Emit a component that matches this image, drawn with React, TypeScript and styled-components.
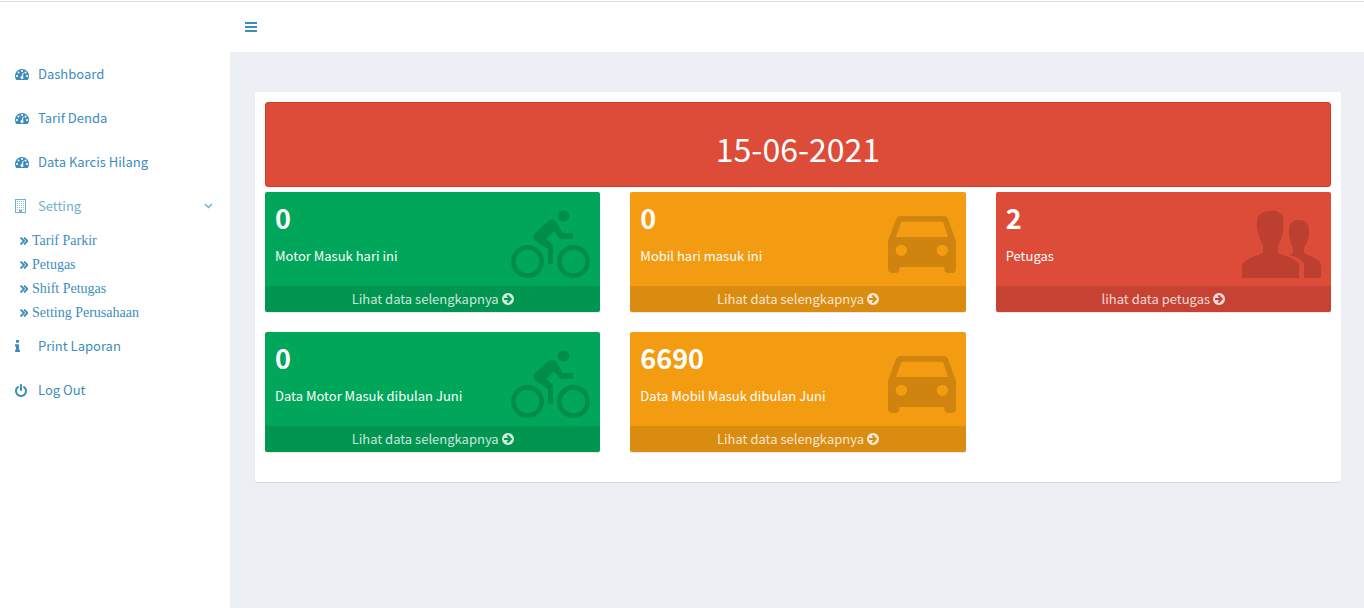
import React from "react";
import styled, { createGlobalStyle } from "styled-components";

const sans = `"Noto Sans CJK SC", "Noto Sans", sans-serif`;

const GlobalStyle = createGlobalStyle`
  * { box-sizing: border-box; }
  body {
    margin: 0;
    background: #ecf0f5;
    font-family: ${sans};
    font-size: 13px;
    line-height: 20px;
    color: #333;
  }
`;

const Page = styled.div`
  display: flex;
  min-height: 100vh;
  border-top: 1px solid #fff;
  background: #ecf0f5;
`;

const Sidebar = styled.nav`
  flex: 0 0 230px;
  padding-top: 50px;
  border-top: 1px solid #d8dadc;
  background: #fff;
`;

const MenuList = styled.ul`
  list-style: none;
  margin: 0;
  padding: 0;
`;

const MenuLink = styled.a<{ $open?: boolean }>`
  display: flex;
  align-items: center;
  height: 44px;
  padding: 0 17px 0 15px;
  color: ${(p) => (p.$open ? "#72afd2" : "#3c8dbc")};
  text-decoration: none;
`;

const IconSlot = styled.span`
  display: flex;
  flex: 0 0 23px;
`;

const MenuText = styled.span`
  flex: 1;
`;

const SubLink = styled.a`
  display: flex;
  align-items: center;
  gap: 4px;
  height: 24px;
  padding: 2px 0 0 20px;
  color: #3c8dbc;
  font-family: "Liberation Serif", serif;
  font-size: 14px;
  text-decoration: none;
`;

const Main = styled.div`
  flex: 1;
  min-width: 0;
`;

const TopBar = styled.header`
  display: flex;
  align-items: center;
  height: 51px;
  padding-left: 15px;
  border-top: 1px solid #d8dadc;
  background: #fff;
`;

const ToggleButton = styled.button`
  display: flex;
  padding: 0;
  border: 0;
  background: none;
  color: #3c8dbc;
`;

const Box = styled.main`
  margin: 40px 23px 40px 25px;
  padding: 10px 10px 30px;
  border-radius: 3px;
  background: #fff;
  box-shadow: 0 1px 1px rgba(0, 0, 0, 0.1);
`;

const Banner = styled.div`
  height: 85px;
  margin-bottom: 5px;
  padding-top: 21px;
  border: 1px solid #d73925;
  border-radius: 3px;
  background: #dd4b39;
  color: #fff;
  font-size: 32px;
  line-height: 48px;
  text-align: center;
`;

const CardGrid = styled.div`
  display: grid;
  grid-template-columns: repeat(3, 1fr);
  gap: 20px 30px;
`;

const tones = { green: "#00a65a", orange: "#f39c12", red: "#dd4b39" };

const Card = styled.section<{ $tone: keyof typeof tones }>`
  overflow: hidden;
  border-radius: 2px;
  background: ${(p) => tones[p.$tone]};
  box-shadow: 0 1px 1px rgba(0, 0, 0, 0.1);
  color: #fff;
`;

const CardBody = styled.div`
  display: flex;
  justify-content: space-between;
  height: 94px;
  padding: 8px 10px;
`;

const Value = styled.h3`
  margin: 0 0 10px;
  font-size: 27px;
  font-weight: 700;
  line-height: 36px;
`;

const Caption = styled.p`
  margin: 0;
  font-size: 13px;
  line-height: 20px;
`;

const Art = styled.svg`
  margin-top: 10px;
  width: 79px;
  height: 68px;
  color: rgba(0, 0, 0, 0.15);
`;

const CardLink = styled.a`
  display: flex;
  align-items: center;
  justify-content: center;
  gap: 3px;
  height: 26px;
  background: rgba(0, 0, 0, 0.1);
  color: rgba(255, 255, 255, 0.8);
  font-size: 13px;
  text-decoration: none;
`;

const DashIcon = () => (
  <svg width="14" height="14" viewBox="0 0 1792 1792" fill="currentColor" aria-hidden="true">
    <path d="M384 1152q0-53-37.5-90.5t-90.5-37.5-90.5 37.5-37.5 90.5 37.5 90.5 90.5 37.5 90.5-37.5 37.5-90.5zm192-448q0-53-37.5-90.5t-90.5-37.5-90.5 37.5-37.5 90.5 37.5 90.5 90.5 37.5 90.5-37.5 37.5-90.5zm428 481l101-382q6-26-7.5-48.5t-38.5-29.5-48 6.5-30 39.5l-101 382q-60 5-107 43.5t-63 98.5q-20 77 20 146t117 89 146-20 89-117q16-60-6-117t-72-91zm660-33q0-53-37.5-90.5t-90.5-37.5-90.5 37.5-37.5 90.5 37.5 90.5 90.5 37.5 90.5-37.5 37.5-90.5zm-640-640q0-53-37.5-90.5t-90.5-37.5-90.5 37.5-37.5 90.5 37.5 90.5 90.5 37.5 90.5-37.5 37.5-90.5zm448 192q0-53-37.5-90.5t-90.5-37.5-90.5 37.5-37.5 90.5 37.5 90.5 90.5 37.5 90.5-37.5 37.5-90.5zm320 448q0 261-141 483-19 29-54 29h-1402q-35 0-54-29-141-221-141-483 0-182 71-348t191-286 286-191 348-71 348 71 286 191 191 286 71 348z" />
  </svg>
);

const BuildingIcon = () => (
  <svg width="11" height="14" viewBox="0 0 11 14" fill="currentColor" shapeRendering="crispEdges" aria-hidden="true">
    <path fillRule="evenodd" d="M0 0H11V14H0ZM1 1V13H10V1Z" />
    {[2, 4, 6, 8, 10].map((y) => (
      <path key={y} opacity="0.8" d={`M2 ${y}h1v1h-1zM4 ${y}h1v1h-1zM6 ${y}h1v1h-1zM8 ${y}h1v1h-1z`} />
    ))}
    <path d="M4 11h3v3h-3z" />
  </svg>
);

const InfoIcon = () => (
  <svg width="5" height="12" viewBox="576 128 640 1408" fill="currentColor" preserveAspectRatio="none" aria-hidden="true">
    <path d="M1216 1344v128q0 26-19 45t-45 19h-512q-26 0-45-19t-19-45v-128q0-26 19-45t45-19h64v-384h-64q-26 0-45-19t-19-45v-128q0-26 19-45t45-19h384q26 0 45 19t19 45v576h64q26 0 45 19t19 45zm-128-1152v192q0 26-19 45t-45 19h-256q-26 0-45-19t-19-45v-192q0-26 19-45t45-19h256q26 0 45 19t19 45z" />
  </svg>
);

const PowerIcon = () => (
  <svg width="12" height="13" viewBox="128 0 1536 1664" fill="currentColor" aria-hidden="true">
    <path d="M1664 896q0 156-61 298t-164 245-245 164-298 61-298-61-245-164-164-245-61-298q0-182 80.5-343t226.5-270q43-32 95.5-25t83.5 50q32 42 24.5 94.5t-49.5 84.5q-98 74-151.5 181t-53.5 228q0 104 40.5 198.5t109.5 163.5 163.5 109.5 198.5 40.5 198.5-40.5 163.5-109.5 109.5-163.5 40.5-198.5q0-121-53.5-228t-151.5-181q-42-32-49.5-84.5t24.5-94.5q31-43 84-50t95 25q146 109 226.5 270t80.5 343zm-640-768v640q0 52-38 90t-90 38-90-38-38-90v-640q0-52 38-90t90-38 90 38 38 90z" />
  </svg>
);

const ChevronDown = () => (
  <svg width="9" height="6" viewBox="0 0 9 6" fill="none" stroke="currentColor" strokeWidth="1.5" aria-hidden="true">
    <path d="M1 1l3.5 3.5L8 1" />
  </svg>
);

const DoubleRight = () => (
  <svg width="8" height="8" viewBox="0 0 8 8" fill="none" stroke="currentColor" strokeWidth="1.8" aria-hidden="true">
    <path d="M0.5 0.5L4 4L0.5 7.500M4 0.5L7.500 4L4 7.500" />
  </svg>
);

const BarsIcon = () => (
  <svg width="12" height="10" viewBox="0 0 12 10" fill="currentColor" aria-hidden="true">
    <path d="M0 0h12v2H0zM0 4h12v2H0zM0 8h12v2H0z" />
  </svg>
);

const ArrowCircle = () => (
  <svg width="12" height="12" viewBox="128 128 1536 1536" fill="currentColor" aria-hidden="true">
    <path d="M1413 896q0-27-18-45l-91-91-362-362q-18-18-45-18t-45 18l-91 91q-18 18-18 45t18 45l189 189h-502q-26 0-45 19t-19 45v128q0 26 19 45t45 19h502l-189 189q-18 18-18 45t18 45l91 91q18 18 45 18t45-18l362-362 91-91q18-18 18-45zm251 0q0 209-103 385.5t-279.5 279.5-385.500 103-385.500-103-279.500-279.500-103-385.500 103-385.500 279.500-279.500 385.500-103 385.500 103 279.500 279.500 103 385.500z" />
  </svg>
);

const BikeArt = () => (
  <Art viewBox="63 75 237 204" fill="currentColor" aria-hidden="true">
    <path
      fillRule="evenodd"
      d="M112.500 180a49.500 49.500 0 1 0 0 99a49.500 49.500 0 0 0 0-99zM112.500 194a35.500 35.500 0 1 1 0 71a35.500 35.500 0 0 1 0-71zM250.500 180a49.500 49.500 0 1 0 0 99a49.500 49.500 0 0 0 0-99zM250.500 194a35.500 35.500 0 1 1 0 71a35.500 35.500 0 0 1 0-71z"
    />
    <circle cx="220.500" cy="93" r="17.500" />
    <path d="M249 144V161H209L192 139L169 162L184 175Q189 180 189 187V237H174V193L138 169Q123 157 135 145L171 111Q185 98 199 111L218 144Z" />
  </Art>
);

const CarArt = () => (
  <Art viewBox="21 75 237 204" fill="currentColor" aria-hidden="true">
    <path
      fillRule="evenodd"
      d="M92 93H221Q230 93 234 102L258 167V252Q258 264 246 264H235Q223 264 223 252V246H88V252Q88 264 76 264H66Q54 264 54 252V167L78 102Q82 93 92 93ZM94 110L78 156H234L219 110ZM94 179a17 17 0 1 0 0 34a17 17 0 0 0 0-34zM217 179a17 17 0 1 0 0 34a17 17 0 0 0 0-34z"
    />
  </Art>
);

const PeopleArt = () => (
  <Art viewBox="66 75 237 204" fill="currentColor" aria-hidden="true">
    <path d="M66 279V237Q78 224 99 215Q129 206 129 202V181Q120 170 117 150Q109 137 111 117Q109 93 125 84Q137 76 151 77Q168 75 180 84Q193 93 190 117Q192 137 186 150Q183 170 174 181V202Q176 207 205 215Q228 224 237 237V279Z" />
    <path d="M252 279V237Q243 219 210 210V207Q217 208 219 202V187Q212 178 210 163Q206 155 207 142Q205 105 236 105Q269 105 267 142Q268 155 263 163Q260 178 252 187V202Q253 208 276 215Q297 224 300 232L303 243V279Z" />
  </Art>
);

const arts = { bike: BikeArt, car: CarArt, people: PeopleArt };

type CardData = {
  tone: keyof typeof tones;
  art: keyof typeof arts;
  value: string;
  caption: string;
  link: string;
};

const cards: CardData[] = [
  { tone: "green", art: "bike", value: "0", caption: "Motor Masuk hari ini", link: "Lihat data selengkapnya" },
  { tone: "orange", art: "car", value: "0", caption: "Mobil hari masuk ini", link: "Lihat data selengkapnya" },
  { tone: "red", art: "people", value: "2", caption: "Petugas", link: "lihat data petugas" },
  { tone: "green", art: "bike", value: "0", caption: "Data Motor Masuk dibulan Juni", link: "Lihat data selengkapnya" },
  { tone: "orange", art: "car", value: "6690", caption: "Data Mobil Masuk dibulan Juni", link: "Lihat data selengkapnya" },
];

type Item = { label: string; icon: React.ReactNode; children?: string[] };

const menu: Item[] = [
  { label: "Dashboard", icon: <DashIcon /> },
  { label: "Tarif Denda", icon: <DashIcon /> },
  { label: "Data Karcis Hilang", icon: <DashIcon /> },
  {
    label: "Setting",
    icon: <BuildingIcon />,
    children: ["Tarif Parkir", "Petugas", "Shift Petugas", "Setting Perusahaan"],
  },
  { label: "Print Laporan", icon: <InfoIcon /> },
  { label: "Log Out", icon: <PowerIcon /> },
];

export default function App() {
  return (
    <>
      <GlobalStyle />
      <Page>
        <Sidebar>
          <MenuList>
            {menu.map((item) => (
              <li key={item.label}>
                <MenuLink href="#" $open={!!item.children}>
                  <IconSlot>{item.icon}</IconSlot>
                  <MenuText>{item.label}</MenuText>
                  {item.children && <ChevronDown />}
                </MenuLink>
                {item.children && (
                  <MenuList>
                    {item.children.map((child) => (
                      <li key={child}>
                        <SubLink href="#">
                          <DoubleRight />
                          {child}
                        </SubLink>
                      </li>
                    ))}
                  </MenuList>
                )}
              </li>
            ))}
          </MenuList>
        </Sidebar>
        <Main>
          <TopBar>
            <ToggleButton type="button" aria-label="Toggle navigation">
              <BarsIcon />
            </ToggleButton>
          </TopBar>
          <Box>
            <Banner>15-06-2021</Banner>
            <CardGrid>
              {cards.map((card) => {
                const Picture = arts[card.art];
                return (
                  <Card key={card.caption} $tone={card.tone}>
                    <CardBody>
                      <div>
                        <Value>{card.value}</Value>
                        <Caption>{card.caption}</Caption>
                      </div>
                      <Picture />
                    </CardBody>
                    <CardLink href="#">
                      {card.link}
                      <ArrowCircle />
                    </CardLink>
                  </Card>
                );
              })}
            </CardGrid>
          </Box>
        </Main>
      </Page>
    </>
  );
}
